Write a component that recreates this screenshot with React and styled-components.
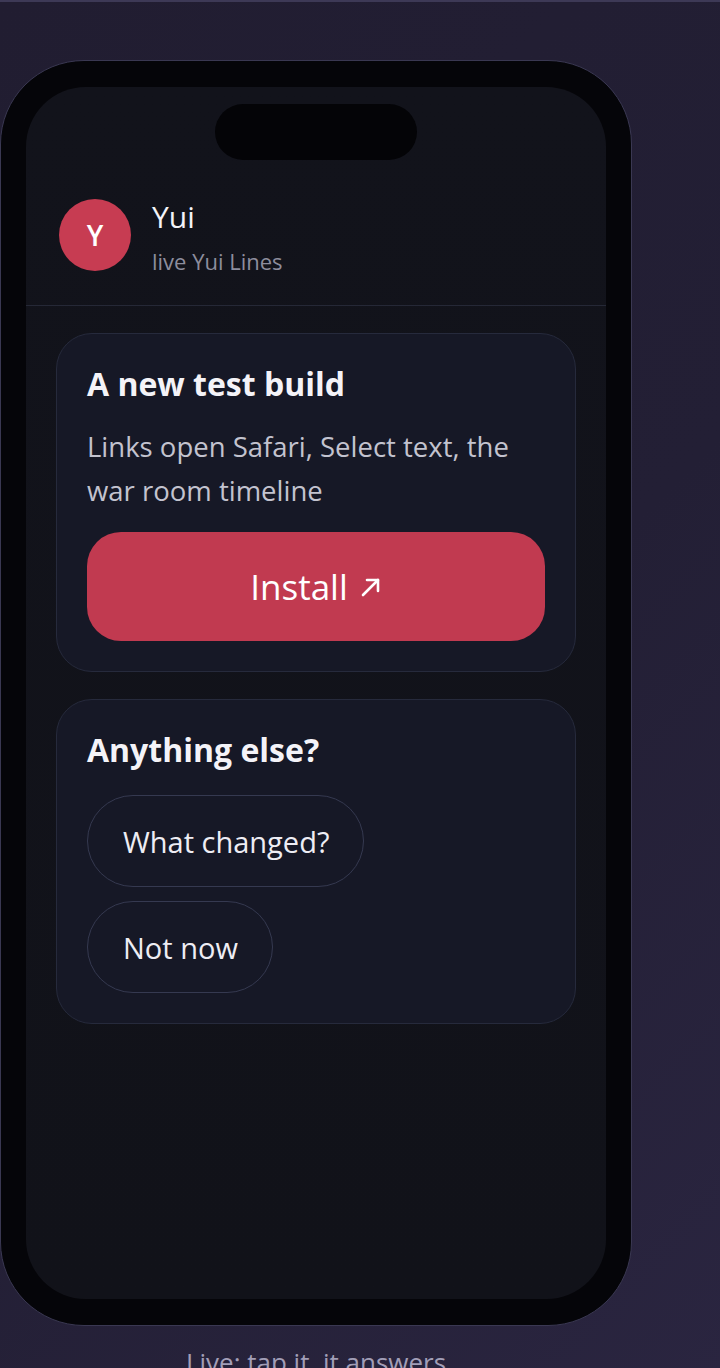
import React from "react";
import styled, { createGlobalStyle } from "styled-components";

const Global = createGlobalStyle`
  html, body {
    margin: 0;
    padding: 0;
    min-height: 100%;
    background: linear-gradient(135deg, #211d31 0%, #231f35 55%, #2a2540 100%);
  }
  body {
    min-height: 100vh;
    font-family: "Open Sans", "Noto Sans", sans-serif;
    color: #f3f2f8;
  }
  * { box-sizing: border-box; }
`;

const Page = styled.div`
  min-height: 1368px;
  border-top: 2px solid #3d3956;
  padding-top: 58px;
  overflow: hidden;
`;

const Column = styled.div`
  width: 632px;
  display: flex;
  flex-direction: column;
  align-items: center;
`;

const Frame = styled.div`
  width: 632px;
  height: 1266px;
  background: #050509;
  border: 1.5px solid #3a3852;
  border-radius: 84px;
  padding: 26px 25px;
  display: flex;
`;

const Screen = styled.div`
  flex: 1;
  background: linear-gradient(180deg, #12131b 0%, #111219 100%);
  border-radius: 60px;
  display: flex;
  flex-direction: column;
  overflow: hidden;
`;

const Notch = styled.div`
  align-self: center;
  width: 202px;
  height: 56px;
  margin-top: 17px;
  background: #040407;
  border-radius: 28px;
`;

const Header = styled.div`
  display: flex;
  align-items: flex-start;
  gap: 21px;
  padding: 39px 33px 34px;
  border-bottom: 1.5px solid #252836;
`;

const Avatar = styled.div`
  flex: none;
  width: 72px;
  height: 72px;
  border-radius: 50%;
  background: #c73c52;
  color: #ffffff;
  font-size: 28px;
  font-weight: 600;
  display: flex;
  align-items: center;
  justify-content: center;
`;

const Who = styled.div`
  display: flex;
  flex-direction: column;
  height: 72px;
`;

const Name = styled.div`
  font-size: 30px;
  line-height: 36px;
  font-weight: 500;
  color: #f4f3f8;
`;

const Sub = styled.div`
  font-size: 22px;
  line-height: 28px;
  color: #8d8d9d;
  margin-top: 12px;
`;

const Content = styled.div`
  display: flex;
  flex-direction: column;
  gap: 27px;
  padding: 27px 30px;
`;

const Card = styled.div`
  background: #161826;
  border: 1.5px solid #262a3c;
  border-radius: 36px;
  padding: 31px 30px 30px;
  display: flex;
  flex-direction: column;
  align-items: flex-start;
`;

const Title = styled.div`
  font-size: 32px;
  line-height: 38px;
  font-weight: 700;
  color: #f4f3f8;
`;

const Body = styled.div`
  margin-top: 22px;
  font-size: 27.5px;
  line-height: 44px;
  color: #c3c3cf;
`;

const Primary = styled.button`
  align-self: stretch;
  margin-top: 19px;
  height: 109px;
  border: none;
  border-radius: 34px;
  background: #c13a50;
  color: #ffffff;
  font-family: inherit;
  font-size: 35px;
  display: flex;
  align-items: center;
  justify-content: center;
  gap: 12px;
`;

const Chips = styled.div`
  margin-top: 26px;
  display: flex;
  flex-direction: column;
  align-items: flex-start;
  gap: 14px;
`;

const Chip = styled.button`
  height: 92px;
  padding: 0 34px 0 35px;
  border-radius: 46px;
  border: 1.5px solid #353950;
  background: transparent;
  color: #eeedf4;
  font-family: inherit;
  font-size: 29px;
`;

const Caption = styled.div`
  margin-top: 19px;
  font-size: 26px;
  line-height: 34px;
  color: #a29eb7;
`;

const Arrow = () => (
  <svg width="22" height="22" viewBox="0 0 22 22" fill="none" stroke="#fff" strokeWidth="2.6" strokeLinecap="round" strokeLinejoin="round">
    <path d="M3 19 L18 4" />
    <path d="M7 4 H18 V15" />
  </svg>
);

export default function App() {
  return (
    <>
      <Global />
      <Page>
        <Column>
          <Frame>
            <Screen>
              <Notch />
              <Header>
                <Avatar>Y</Avatar>
                <Who>
                  <Name>Yui</Name>
                  <Sub>live Yui Lines</Sub>
                </Who>
              </Header>
              <Content>
                <Card>
                  <Title>A new test build</Title>
                  <Body>
                    Links open Safari, Select text, the
                    <br />
                    war room timeline
                  </Body>
                  <Primary>
                    Install <Arrow />
                  </Primary>
                </Card>
                <Card>
                  <Title>Anything else?</Title>
                  <Chips>
                    <Chip>What changed?</Chip>
                    <Chip>Not now</Chip>
                  </Chips>
                </Card>
              </Content>
            </Screen>
          </Frame>
          <Caption>Live: tap it, it answers</Caption>
        </Column>
      </Page>
    </>
  );
}
